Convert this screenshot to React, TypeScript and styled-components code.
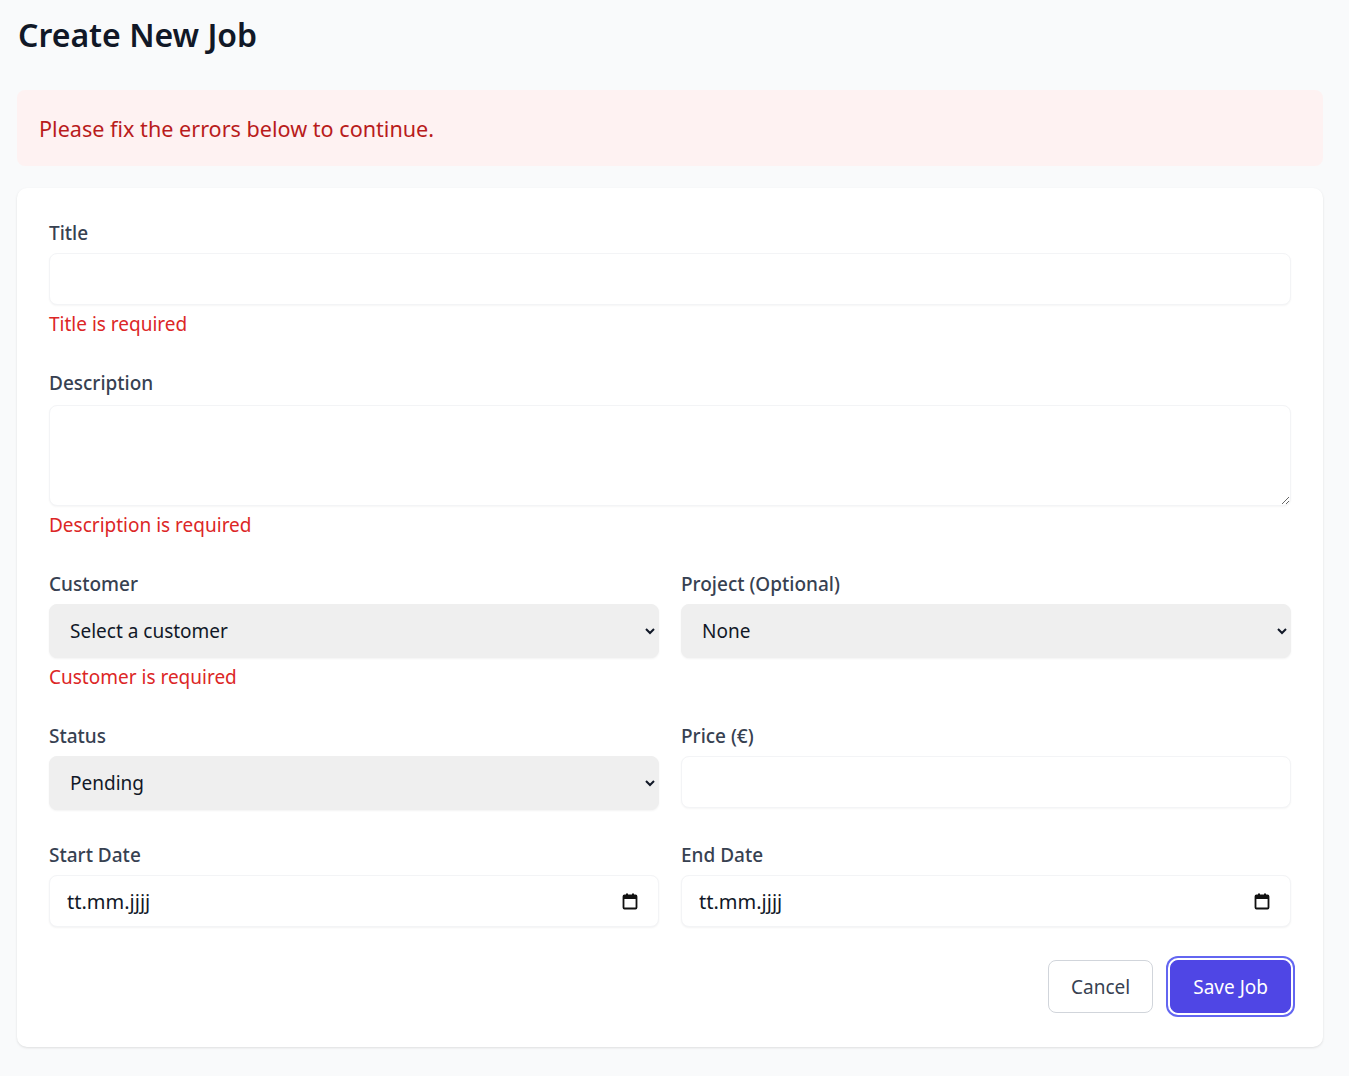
import React from "react";
import styled, { createGlobalStyle } from "styled-components";

const Global = createGlobalStyle`
  html, body { margin: 0; padding: 0; background: #f9fafb; }
  body { font-family: "Noto Sans", "Open Sans", sans-serif; color: #111827; }
  * { box-sizing: border-box; }
`;

const Page = styled.div`
  padding: 16px 26px 29px 17px;
  min-height: 1076px;
`;

const Heading = styled.h1`
  margin: 0 0 36px 1px;
  font-size: 32px;
  line-height: 38px;
  font-weight: 600;
  color: #111827;
`;

const Banner = styled.div`
  background: #fef2f2;
  color: #b91c1c;
  border-radius: 8px;
  padding: 0 22px;
  height: 76px;
  display: flex;
  align-items: center;
  font-size: 21.6px;
  margin-bottom: 22px;
`;

const Card = styled.form`
  background: #fff;
  border-radius: 10px;
  box-shadow: 0 1px 3px rgba(0, 0, 0, 0.08), 0 1px 2px rgba(0, 0, 0, 0.04);
  padding: 32px 32px 34px 32px;
  display: flex;
  flex-direction: column;
  gap: 32px;
`;

const Row = styled.div`
  display: grid;
  grid-template-columns: 1fr 1fr;
  column-gap: 22px;
  align-items: start;
`;

const Field = styled.div`
  display: flex;
  flex-direction: column;
  gap: 6px;
`;

const Label = styled.label`
  font-size: 19px;
  line-height: 27px;
  color: #374151;
  font-weight: 500;
`;

const baseControl = `
  width: 100%;
  font-family: "Noto Sans", "Open Sans", sans-serif;
  font-size: 19px;
  color: #111827;
  border-radius: 8px;
  outline: none;
`;

const TextInput = styled.input`
  ${baseControl}
  height: 52px;
  border: 1px solid #f3f4f6;
  box-shadow: 0 1px 2px rgba(0, 0, 0, 0.04);
  background: #fff;
  padding: 0 16px;
`;

const TextArea = styled.textarea`
  ${baseControl}
  height: 101px;
  margin-top: 2px;
  border: 1px solid #f3f4f6;
  box-shadow: 0 1px 2px rgba(0, 0, 0, 0.04);
  background: #fff;
  padding: 12px 16px;
  resize: vertical;
  display: block;
`;

const Select = styled.select`
  ${baseControl}
  height: 54px;
  border: 1px solid #efefef;
  background-color: #efefef;
  box-shadow: 0 1px 2px rgba(0, 0, 0, 0.05);
  padding: 0 14px 0 16px;
`;

const ErrorText = styled.div`
  font-size: 19px;
  line-height: 27px;
  color: #dc2626;
`;

const DateBox = styled.div`
  height: 52px;
  border: 1px solid #f3f4f6;
  box-shadow: 0 1px 2px rgba(0, 0, 0, 0.05);
  border-radius: 8px;
  display: flex;
  align-items: center;
  padding: 0 20px 0 17px;
  background: #fff;
`;

const DateInput = styled.input`
  flex: 1;
  border: none;
  outline: none;
  background: transparent;
  font-family: "Noto Sans", "Open Sans", sans-serif;
  font-size: 20px;
  color: #111827;
  padding: 0;
  &::placeholder { color: #111827; opacity: 1; }
`;

const Actions = styled.div`
  display: flex;
  justify-content: flex-end;
  gap: 17px;
  margin-top: 1px;
`;

const Button = styled.button<{ $primary?: boolean }>`
  height: 53px;
  padding: 0 22px;
  border-radius: 8px;
  font-family: "Noto Sans", "Open Sans", sans-serif;
  font-size: 19px;
  cursor: pointer;
  border: 1px solid ${(p) => (p.$primary ? "#4f46e5" : "#d1d5db")};
  background: ${(p) => (p.$primary ? "#4f46e5" : "#fff")};
  color: ${(p) => (p.$primary ? "#fff" : "#374151")};
  box-shadow: ${(p) => (p.$primary ? "0 0 0 2px #fff, 0 0 0 4px #6366f1" : "none")};
`;

const CalendarIcon = () => (
  <svg width="16" height="17" viewBox="0 0 16 17" aria-hidden="true">
    <rect x="4" y="0.5" width="2" height="3" fill="#111" />
    <rect x="10" y="0.5" width="2" height="3" fill="#111" />
    <rect x="1.5" y="2.5" width="13" height="13" rx="1" fill="none" stroke="#111" strokeWidth="1.8" />
    <rect x="1.5" y="2.5" width="13" height="3.5" fill="#111" />
  </svg>
);

const DateField = ({ label }: { label: string }) => (
  <Field>
    <Label>{label}</Label>
    <DateBox>
      <DateInput type="text" placeholder="tt.mm.jjjj" readOnly />
      <CalendarIcon />
    </DateBox>
  </Field>
);

export default function App() {
  return (
    <>
      <Global />
      <Page>
        <Heading>Create New Job</Heading>
        <Banner>Please fix the errors below to continue.</Banner>
        <Card onSubmit={(e) => e.preventDefault()}>
          <Field>
            <Label>Title</Label>
            <TextInput type="text" />
            <ErrorText>Title is required</ErrorText>
          </Field>
          <Field>
            <Label>Description</Label>
            <TextArea />
            <ErrorText>Description is required</ErrorText>
          </Field>
          <Row>
            <Field>
              <Label>Customer</Label>
              <Select defaultValue="">
                <option value="">Select a customer</option>
              </Select>
              <ErrorText>Customer is required</ErrorText>
            </Field>
            <Field>
              <Label>Project (Optional)</Label>
              <Select defaultValue="">
                <option value="">None</option>
              </Select>
            </Field>
          </Row>
          <Row>
            <Field>
              <Label>Status</Label>
              <Select defaultValue="pending">
                <option value="pending">Pending</option>
              </Select>
            </Field>
            <Field>
              <Label>Price (€)</Label>
              <TextInput type="text" />
            </Field>
          </Row>
          <Row>
            <DateField label="Start Date" />
            <DateField label="End Date" />
          </Row>
          <Actions>
            <Button type="button">Cancel</Button>
            <Button type="submit" $primary>Save Job</Button>
          </Actions>
        </Card>
      </Page>
    </>
  );
}
